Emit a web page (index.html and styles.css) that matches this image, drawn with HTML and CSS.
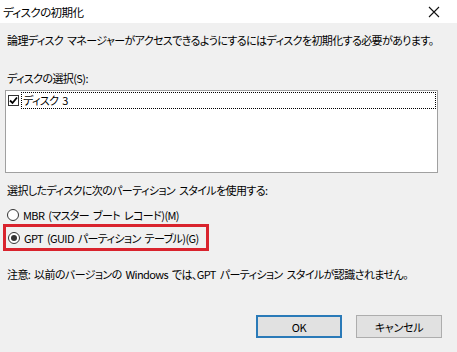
FILE: index.html
```html
<!DOCTYPE html>
<html lang="ja">
<head>
    <meta charset="UTF-8">
    <title>ディスクの初期化</title>
    <link rel="stylesheet" href="styles.css">
</head>
<body>
    <div class="dialog">
        <div class="titlebar">
            <span class="title">ディスクの初期化</span>
            <span class="close">
                <svg width="12" height="12" viewBox="0 0 12 12"><path d="M1 1L11 11M11 1L1 11" stroke="#111" stroke-width="1.1" fill="none"/></svg>
            </span>
        </div>

        <div class="content">
            <p class="intro">論理ディスク マネージャーがアクセスできるようにするにはディスクを初期化する必要があります。</p>

            <p class="label">ディスクの選択(S):</p>
            <div class="listbox">
                <div class="list-item">
                    <span class="checkbox">
                        <svg width="9" height="9" viewBox="0 0 9 9"><path d="M1 4.5L3.5 7L8 1.5" stroke="#000" stroke-width="1.8" fill="none"/></svg>
                    </span>
                    <span class="item-text">ディスク 3</span>
                </div>
            </div>

            <p class="label style-label">選択したディスクに次のパーティション スタイルを使用する:</p>
            <div class="radio-row">
                <span class="radio"></span>
                <span>MBR (マスター ブート レコード)(M)</span>
            </div>
            <div class="radio-row highlight">
                <span class="radio checked"></span>
                <span>GPT (GUID パーティション テーブル)(G)</span>
            </div>

            <p class="note">注意: 以前のバージョンの Windows では、GPT パーティション スタイルが認識されません。</p>

            <div class="buttons">
                <button class="btn btn-ok">OK</button>
                <button class="btn">キャンセル</button>
            </div>
        </div>
    </div>
</body>
</html>
```

FILE: styles.css
```css
body {
    margin: 0;
    padding: 0;
    background: #f0f0f0;
    font-family: "Noto Sans CJK JP", "Noto Sans", sans-serif;
    font-size: 11px;
    letter-spacing: -0.6px;
    word-spacing: 2px;
    font-feature-settings: "palt";
    color: #000;
}

.dialog {
    width: 457px;
    height: 352px;
    overflow: hidden;
}

.titlebar {
    height: 23px;
    background: #fff;
    display: flex;
    align-items: center;
    justify-content: space-between;
    padding-left: 3px;
}

.title {
    font-size: 11.5px;
}

.close {
    width: 46px;
    display: flex;
    justify-content: center;
    align-items: center;
    height: 23px;
}

.content {
    padding: 0 7px;
}

p {
    margin: 0;
    line-height: 16px;
    white-space: nowrap;
}

.intro {
    margin-top: 9px;
}

.label {
    margin-top: 22px;
}

.listbox {
    margin: 4px 0 0 -2px;
    width: 431px;
    height: 81px;
    background: #fff;
    border: 1px solid #a0a0a0;
}

.list-item {
    display: flex;
    align-items: center;
    height: 17px;
    margin: 1px 1px 0 2px;
}

.checkbox {
    width: 11px;
    height: 11px;
    border: 1px solid #333;
    background: #fff;
    display: flex;
    align-items: center;
    justify-content: center;
    box-sizing: border-box;
    margin-right: 2px;
}

.item-text {
    flex: 1;
    height: 17px;
    border: 1px dotted #000;
    box-sizing: border-box;
    padding-left: 1px;
    line-height: 15px;
}

.style-label {
    margin-top: 9px;
}

.radio-row {
    display: flex;
    align-items: center;
    gap: 4px;
    height: 18px;
    margin-top: 8px;
    white-space: nowrap;
}

.radio {
    width: 12px;
    height: 12px;
    border: 1px solid #333;
    border-radius: 50%;
    background: #fff;
    box-sizing: border-box;
    position: relative;
    flex-shrink: 0;
}

.radio.checked::after {
    content: "";
    position: absolute;
    left: 2px;
    top: 2px;
    width: 6px;
    height: 6px;
    border-radius: 50%;
    background: #333;
}

.highlight {
    margin: 0 0 0 -4px;
    width: 198px;
    height: 21px;
    padding-left: 2px;
    border: 3px solid #d9232d;
}

.note {
    margin-top: 15px;
}

.buttons {
    display: flex;
    justify-content: flex-end;
    gap: 14px;
    margin-top: 33px;
    padding-right: 8px;
}

.btn {
    font-family: inherit;
    font-size: 11px;
    letter-spacing: -0.3px;
    font-feature-settings: "palt";
    width: 86px;
    height: 23px;
    background: #e1e1e1;
    border: 1px solid #adadad;
    padding: 0;
    color: #000;
}

.btn-ok {
    border: 2px solid #2a7ab8;
}
```
